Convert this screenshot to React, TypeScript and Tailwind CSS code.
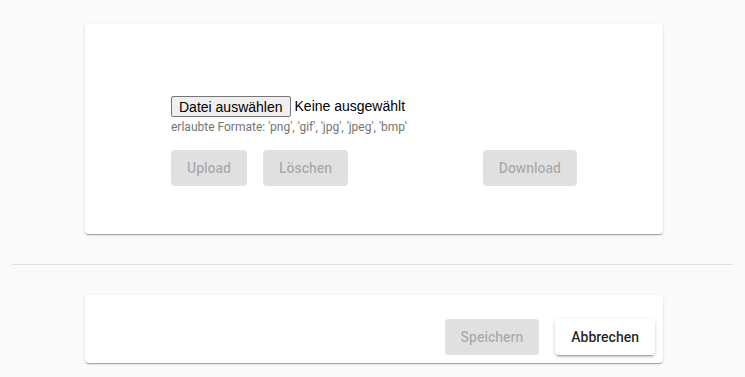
const roboto = { fontFamily: 'Roboto, "Noto Sans", sans-serif' };

const flatBtn = 'h-9 px-4 rounded-[4px] bg-[#e0e0e0] text-[rgba(0,0,0,0.26)] text-[14px] font-medium leading-[35px] cursor-default';

export default function App() {
  return (
    <div className="min-h-screen bg-[#fafafa] pt-6 pb-4" style={roboto}>
      <div className="ml-[85px] w-[578px] h-[210px] bg-white rounded-[4px] shadow-[0_2px_1px_-1px_rgba(0,0,0,0.2),0_1px_1px_0_rgba(0,0,0,0.14),0_1px_3px_0_rgba(0,0,0,0.12)] pt-[72px] px-[86px]">
        <div className="flex items-center" style={{ fontFamily: '"Liberation Sans", Arial, sans-serif' }}>
          <button className="h-[21px] px-[7px] bg-[#efefef] border border-[#767676] rounded-[2px] text-[14px] text-black leading-none">
            Datei auswählen
          </button>
          <span className="ml-[4px] text-[14px] text-black">Keine ausgewählt</span>
        </div>
        <div className="mt-[2px] text-[12px] leading-4 text-[#757575]">
          erlaubte Formate: 'png', 'gif', 'jpg', 'jpeg', 'bmp'
        </div>
        <div className="mt-[15px] flex items-center">
          <button className={flatBtn}>Upload</button>
          <button className={`${flatBtn} ml-4`}>Löschen</button>
          <div className="flex-1" />
          <button className={flatBtn}>Download</button>
        </div>
      </div>

      <div className="mx-3 mt-[30px] h-px bg-[#e0e0e0]" />

      <div className="ml-[85px] mt-[30px] w-[578px] h-[68px] bg-white rounded-[4px] shadow-[0_2px_1px_-1px_rgba(0,0,0,0.2),0_1px_1px_0_rgba(0,0,0,0.14),0_1px_3px_0_rgba(0,0,0,0.12)] pt-6 pr-2 flex justify-end items-start gap-4">
        <button className={flatBtn}>Speichern</button>
        <button className="h-9 px-4 rounded-[4px] bg-white text-[rgba(0,0,0,0.87)] text-[14px] font-medium leading-[35px] shadow-[0_3px_1px_-2px_rgba(0,0,0,0.2),0_2px_2px_0_rgba(0,0,0,0.14),0_1px_5px_0_rgba(0,0,0,0.12)]">
          Abbrechen
        </button>
      </div>
    </div>
  );
}
